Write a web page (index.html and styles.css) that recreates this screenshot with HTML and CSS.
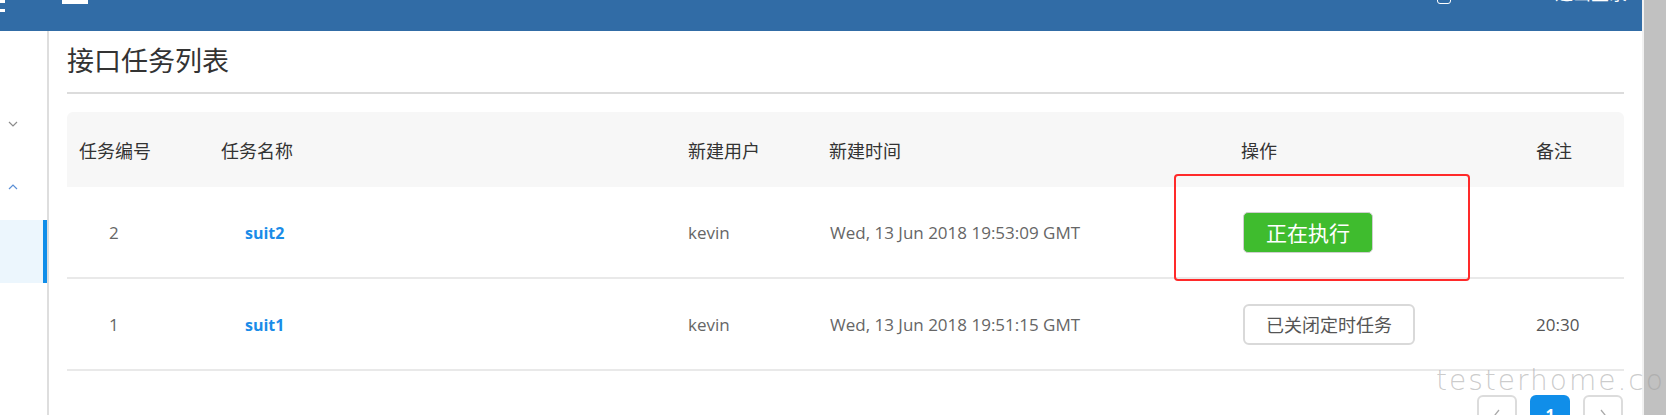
FILE: index.html
```html
<!DOCTYPE html>
<html>
<head>
  <meta charset="utf-8">
  <title>接口任务列表</title>
  <link rel="stylesheet" href="styles.css">
</head>
<body>
  <div class="page">
    <header class="topbar">
      <svg class="menu-icon" width="6" height="12" viewBox="0 0 6 12">
        <rect x="0" y="0" width="5" height="3" fill="#fff"/>
        <rect x="0" y="9" width="5" height="3" fill="#fff"/>
      </svg>
      <div class="logo"></div>
      <div class="top-right">
        <div class="avatar"></div>
        <span class="logout">退出登录</span>
      </div>
    </header>

    <div class="layout">
      <aside class="sidebar">
        <div class="sub">
          <svg width="10" height="6" viewBox="0 0 10 6"><polyline points="1,1 5,5 9,1" fill="none" stroke="#8c8c8c" stroke-width="1.2"/></svg>
        </div>
        <div class="sub open">
          <svg width="10" height="6" viewBox="0 0 10 6"><polyline points="1,5 5,1 9,5" fill="none" stroke="#5b8fd6" stroke-width="1.2"/></svg>
        </div>
        <div class="item active"></div>
      </aside>

      <main class="content">
        <h1 class="title">接口任务列表</h1>

        <div class="table">
          <div class="row head">
            <div class="cell">任务编号</div>
            <div class="cell">任务名称</div>
            <div class="cell">新建用户</div>
            <div class="cell">新建时间</div>
            <div class="cell">操作</div>
            <div class="cell">备注</div>
          </div>
          <div class="row">
            <div class="cell num">2</div>
            <div class="cell name"><a href="#">suit2</a></div>
            <div class="cell">kevin</div>
            <div class="cell date">Wed, 13 Jun 2018 19:53:09 GMT</div>
            <div class="cell action"><button class="btn btn-run">正在执行</button></div>
            <div class="cell remark"></div>
          </div>
          <div class="row">
            <div class="cell num">1</div>
            <div class="cell name"><a href="#">suit1</a></div>
            <div class="cell">kevin</div>
            <div class="cell date">Wed, 13 Jun 2018 19:51:15 GMT</div>
            <div class="cell action"><button class="btn btn-off">已关闭定时任务</button></div>
            <div class="cell remark">20:30</div>
          </div>
        </div>

        <div class="pager">
          <span class="page-btn">
            <svg width="8" height="12" viewBox="0 0 8 12"><polyline points="6,1 2,6 6,11" fill="none" stroke="#aaa" stroke-width="1.3"/></svg>
          </span>
          <span class="page-btn current">1</span>
          <span class="page-btn">
            <svg width="8" height="12" viewBox="0 0 8 12"><polyline points="2,1 6,6 2,11" fill="none" stroke="#aaa" stroke-width="1.3"/></svg>
          </span>
        </div>
      </main>
    </div>
  </div>

  <div class="scrollbar"><div class="thumb"></div></div>

  <!-- annotation box drawn over the screenshot -->
  <div class="mark"></div>
  <div class="watermark">testerhome.com</div>
</body>
</html>
```

FILE: styles.css
```css
body {
  margin: 0;
  height: 415px;
  overflow: hidden;
  display: flex;
  font-family: "Open Sans", "Noto Sans CJK SC", sans-serif;
  color: #333;
  background: #fff;
}

.page {
  flex: 1;
  display: flex;
  flex-direction: column;
  min-width: 0;
}

.topbar {
  height: 31px;
  flex-shrink: 0;
  background-color: #316ca6;
  display: flex;
  align-items: flex-start;
  overflow: hidden;
}

.menu-icon {
  display: block;
}

.logo {
  width: 26px;
  height: 4px;
  margin-left: 56px;
  background: #fff;
}

.top-right {
  margin-left: auto;
  margin-right: 15px;
  display: flex;
  align-items: flex-start;
}

.avatar {
  width: 12px;
  height: 12px;
  margin-top: -10px;
  border: 1px solid #fff;
  border-radius: 3px;
}

.logout {
  margin-left: 104px;
  margin-top: -16px;
  font-size: 18px;
  line-height: 18px;
  color: #fff;
}

.layout {
  flex: 1;
  display: flex;
}

.sidebar {
  width: 47px;
  flex-shrink: 0;
  border-right: 2px solid #dedede;
  padding-top: 63px;
}

.sub {
  height: 60px;
  display: flex;
  align-items: center;
  padding-left: 8px;
}

.sub.open {
  height: 66px;
}

.sub svg {
  display: block;
}

.item {
  height: 63px;
}

.item.active {
  background-color: #ecf6fd;
  border-right: 4px solid #108ee9;
}

.content {
  flex: 1;
  padding: 0 18px;
  min-width: 0;
}

.title {
  margin: 14px 0 0;
  padding-bottom: 15px;
  font-size: 27px;
  line-height: 32px;
  font-weight: normal;
  color: #333;
  border-bottom: 2px solid #dcdcdc;
}

.table {
  margin-top: 18px;
}

.row {
  display: grid;
  grid-template-columns: 142px 467px 141px 412px 295px 1fr;
  align-items: center;
  height: 90px;
  border-bottom: 2px solid #e9e9e9;
  font-size: 17px;
  color: #666;
}

.row.head {
  height: 75px;
  border-bottom: none;
  background-color: #f7f7f7;
  border-radius: 6px 6px 0 0;
  font-size: 18px;
  color: #333;
}

.cell {
  padding-left: 12px;
  white-space: nowrap;
}

.cell.num {
  padding-left: 42px;
}

.cell.name {
  padding-left: 36px;
}

.cell.name a {
  color: #1a8ce8;
  font-weight: bold;
  font-size: 16px;
  text-decoration: none;
}

.cell.date {
  padding-left: 13px;
}

.cell.action {
  padding-left: 14px;
}

.cell.remark {
  color: #555;
}

.btn {
  height: 41px;
  border-radius: 5px;
  font-family: "Noto Sans CJK SC", sans-serif;
  cursor: pointer;
}

.btn-run {
  width: 130px;
  background-color: #3fbc2e;
  border: 1px solid #cfcfcf;
  color: #fff;
  font-size: 21px;
}

.btn-off {
  width: 172px;
  background-color: #fff;
  border: 2px solid #d9d9d9;
  border-radius: 6px;
  color: #555;
  font-size: 18px;
}

.pager {
  display: flex;
  justify-content: flex-end;
  gap: 13px;
  margin-top: 24px;
  padding-right: 1px;
}

.page-btn {
  width: 40px;
  height: 40px;
  box-sizing: border-box;
  border: 2px solid #dcdcdc;
  border-radius: 6px;
  display: flex;
  align-items: center;
  justify-content: center;
  font-size: 16px;
  font-weight: bold;
}

.page-btn.current {
  border: none;
  background-color: #108ee9;
  color: #fff;
}

.scrollbar {
  width: 24px;
  flex-shrink: 0;
  background: #f1f1f1;
  display: flex;
}

.thumb {
  flex: 1;
  margin-left: 2px;
  background: #c1c1c1;
}

.mark {
  position: absolute;
  left: 1174px;
  top: 174px;
  width: 292px;
  height: 103px;
  border: 2px solid #ff2a2a;
  border-radius: 4px;
}

.watermark {
  position: absolute;
  left: 1436px;
  top: 364px;
  font-family: "DejaVu Sans", sans-serif;
  font-weight: 200;
  font-size: 28px;
  letter-spacing: 2px;
  color: rgba(160, 160, 160, 0.55);
  pointer-events: none;
}
```
